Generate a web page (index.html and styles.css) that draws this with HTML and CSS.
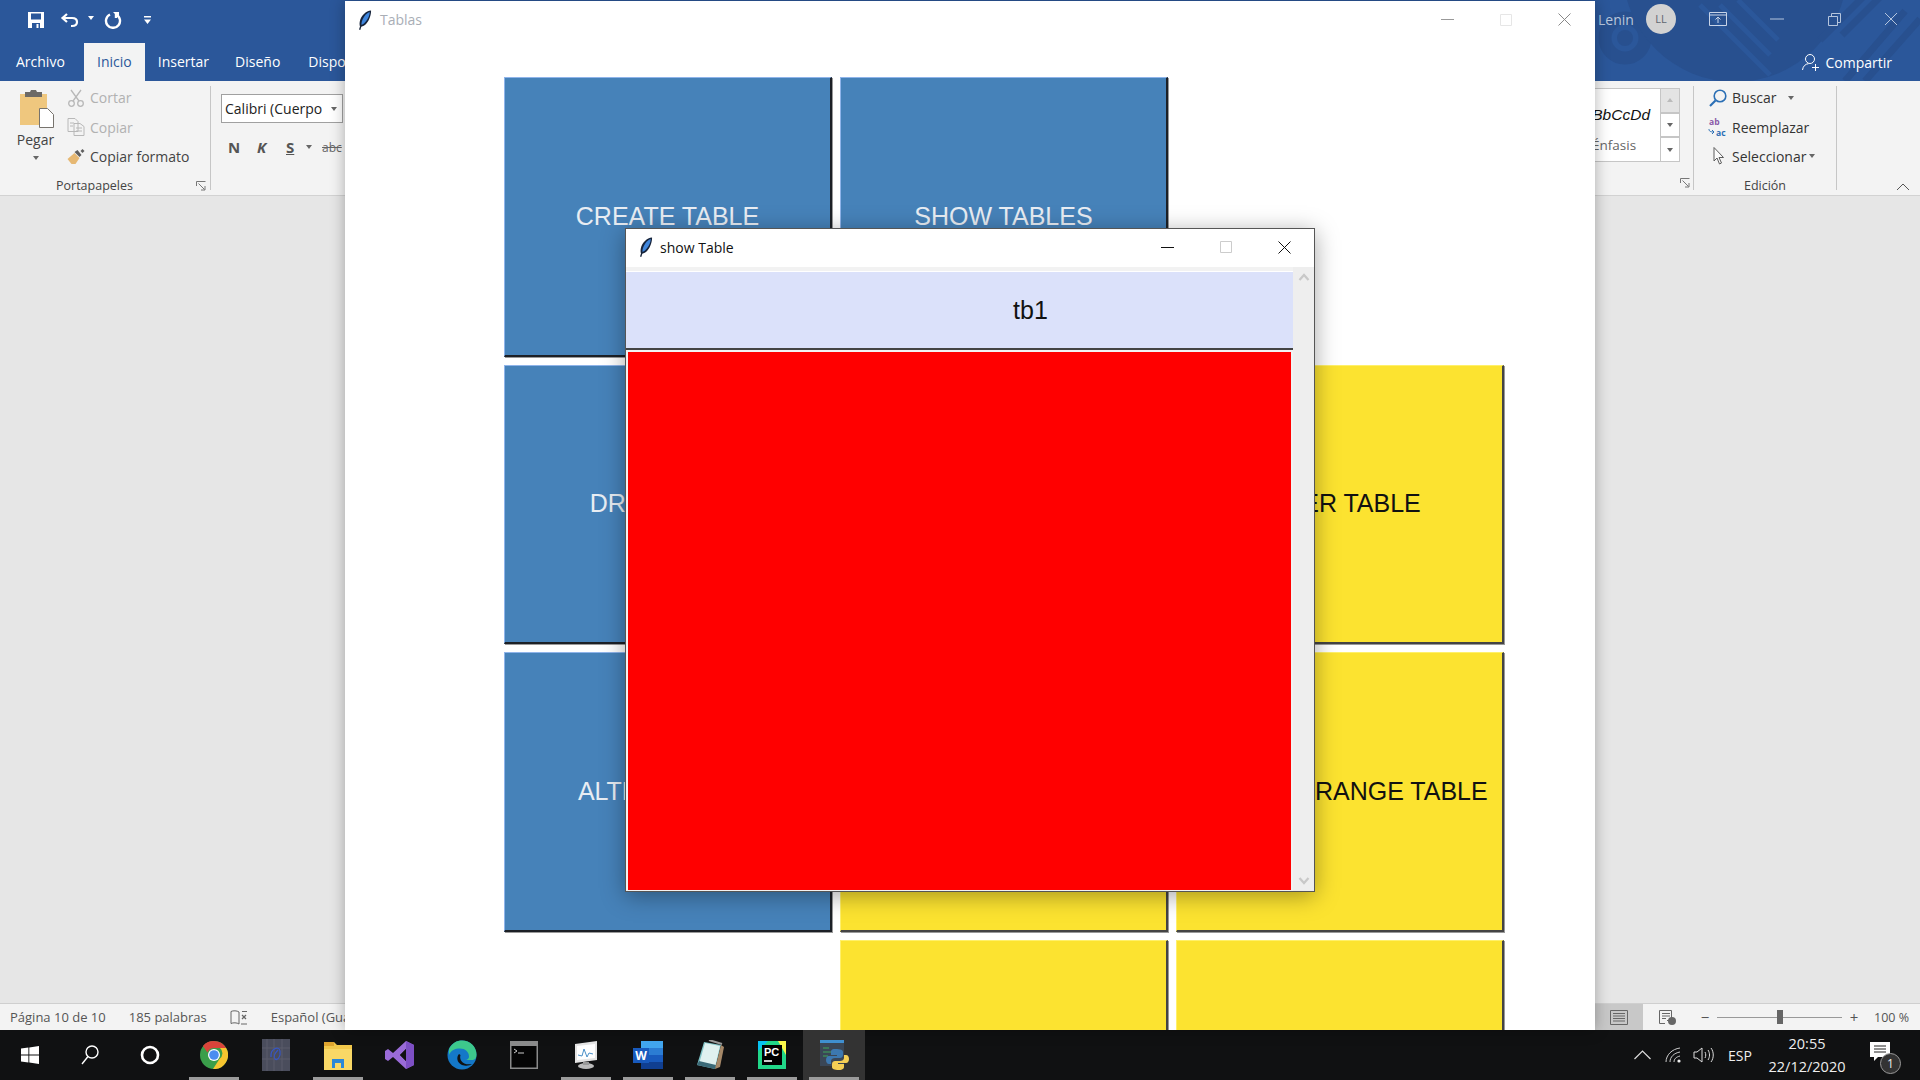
FILE: index.html
```html
<!DOCTYPE html>
<html lang="es">
<head>
  <meta charset="UTF-8">
  <title>Tablas</title>
  <link rel="stylesheet" href="styles.css">
</head>
<body>
  <svg class="defs" width="0" height="0">
    <symbol id="feather" viewBox="0 0 14 20">
      <path d="M13 .5C8 1 3 5.500 1.800 11.500c-.4 2-.3 3.800.2 5l-1 3 1.300.5 1-3.200c3.500-.8 6.500-4 8-8 1.200-3 2-6 1.700-8.800z" fill="#16233a"/>
      <path d="M11.800 2C8.500 3 5 7 3.700 12c-.3 1.200-.3 2.200-.1 3C7 13.500 9.500 9.500 10.800 6.500c.5-1.500.9-3.200 1-4.500z" fill="#3f86dd"/>
    </symbol>
  </svg>

  <div class="word">
    <header class="word-top">
      <svg class="pattern" width="400" height="81" viewBox="0 0 400 81">
        <circle cx="105" cy="38" r="20" fill="none" stroke="#28508f" stroke-width="13"/>
        <circle cx="105" cy="38" r="8" fill="#28508f"/>
        <circle cx="215" cy="-30" r="112" fill="#28508f"/>
        <path d="M180 5l70 70M200 5l50 50M218 0l40 40" stroke="#2b579a" stroke-width="5"/>
        <path d="M325 81l60-70M345 81l55-62M300 40l45-45M322 35l40-40" stroke="#28508f" stroke-width="7"/>
      </svg>
      <div class="top-row">
        <div class="quick">
          <svg class="qa-save" width="18" height="18" viewBox="0 0 18 18"><path d="M1 1h16v16H1z" fill="#fff"/><path d="M4 2.500h10v6H4zM5 12h8v5H5z" fill="#2b579a"/><path d="M9.500 13h2v4h-2z" fill="#fff"/></svg>
          <svg class="qa-undo" width="20" height="18" viewBox="0 0 20 18"><path d="M7 3L2.500 7 7 11M3 7h9c3 0 5 1.500 5 4s-2 4-5 4h-1" fill="none" stroke="#fff" stroke-width="2.200"/></svg>
          <span class="caret white"></span>
          <svg class="qa-redo" width="18" height="18" viewBox="0 0 18 18"><path d="M6 3.500a7 7 0 1 0 6 0M12 1v6" fill="none" stroke="#fff" stroke-width="2.400"/><path d="M9 1h6v6z" fill="#fff"/></svg>
          <svg class="qa-more" width="7" height="8" viewBox="0 0 7 8"><path d="M0 0h7v1.500H0zM0 3.500h7L3.500 8z" fill="#fff"/></svg>
        </div>
        <div class="account">
          <span class="user">Lenin</span>
          <span class="avatar">LL</span>
          <svg class="ctl-mon" width="18" height="14" viewBox="0 0 18 14"><path d="M.5.500h17v13H.500zM.5 3h17M9 11V5M6.500 7.500L9 5l2.500 2.500" fill="none" stroke="#c8d4e8"/></svg>
          <svg class="ctl-min" width="14" height="2" viewBox="0 0 14 2"><path d="M0 1h14" stroke="#b5c5dd"/></svg>
          <svg class="ctl-res" width="13" height="13" viewBox="0 0 13 13"><path d="M.5 3.500h9v9h-9zM3.500 3.500v-3h9v9h-3" fill="none" stroke="#b5c5dd"/></svg>
          <svg class="ctl-close" width="14" height="14" viewBox="0 0 14 14"><path d="M1 1l12 12M13 1L1 13" stroke="#b5c5dd"/></svg>
        </div>
      </div>
      <div class="tab-row">
        <nav class="tabs">
          <span class="tab tab-file">Archivo</span>
          <span class="tab active">Inicio</span>
          <span class="tab tab-ins">Insertar</span>
          <span class="tab tab-dis">Diseño</span>
          <span class="tab">Disposición</span>
        </nav>
        <div class="share">
          <svg width="18" height="19" viewBox="0 0 18 19"><circle cx="8" cy="6" r="4.500" fill="none" stroke="#fff"/><path d="M.5 17c.5-4 3-6 6-6.300M10 11.500h.1M13.500 11v7M10 14.500h7" fill="none" stroke="#fff"/></svg>
          <span>Compartir</span>
        </div>
      </div>
    </header>

    <section class="ribbon">
      <div class="group group-clip">
        <div class="group-body">
          <div class="paste">
            <svg width="34" height="38" viewBox="0 0 34 38"><path d="M0 4h27v31H0z" fill="#efc77e"/><path d="M5 2h5l1-2h5l1 2h5v5H5z" fill="#6d6a66"/><path d="M19.500 18.500h8l6 6v13h-14z" fill="#fff" stroke="#77736d"/></svg>
            <span>Pegar</span>
            <span class="caret"></span>
          </div>
          <div class="stack">
            <div class="cmd off"><svg width="16" height="18" viewBox="0 0 16 18"><circle cx="3.500" cy="14.500" r="2.800" fill="none" stroke="#b8b8b8" stroke-width="1.300"/><circle cx="12.500" cy="14.500" r="2.800" fill="none" stroke="#b8b8b8" stroke-width="1.300"/><path d="M5 12L13 1M11 12L3 1" stroke="#b8b8b8" stroke-width="1.300"/></svg><span>Cortar</span></div>
            <div class="cmd off"><svg width="17" height="18" viewBox="0 0 17 18"><path d="M.5.500h7l3 3v10H.500zM6.500 5.500h6l4 3v9h-10z" fill="#f3f3f3" stroke="#b8b8b8"/><path d="M2.500 5h4M2.500 8h3M8.500 10h6M8.500 13h6" stroke="#b8b8b8"/></svg><span>Copiar</span></div>
            <div class="cmd"><svg width="17" height="16" viewBox="0 0 17 16"><path d="M0 11l7-6 5 5-4 6H4z" fill="#e6b873"/><path d="M7 4l3-2 4 5-2 2z" fill="#5f5f5f"/><path d="M13 3l2-2 2 2-2 2z" fill="#5f5f5f"/></svg><span>Copiar formato</span></div>
          </div>
        </div>
        <div class="group-name">Portapapeles<svg class="launcher" width="10" height="10" viewBox="0 0 10 10"><path d="M.5 5V.5H9.500M2.500 2.500l6 6M5 9H9V5" fill="none" stroke="#777"/></svg></div>
      </div>
      <div class="group group-font">
        <div class="font-box"><span>Calibri (Cuerpo</span><span class="caret"></span></div>
        <div class="font-row">
          <b class="fmt">N</b><b class="fmt fmt-k">K</b><b class="fmt fmt-s">S</b><span class="caret"></span><s class="fmt-abc">abc</s>
        </div>
      </div>
      <div class="ribbon-fill"></div>
      <div class="group group-styles">
        <div class="gallery">
          <div class="style-item">
            <span class="sample">BbCcDd</span>
            <span class="style-name">Énfasis</span>
          </div>
          <div class="gallery-arrows">
            <span class="arrow arrow-up"><span class="caret up"></span></span>
            <span class="arrow"><span class="caret"></span></span>
            <span class="arrow arrow-more"><span class="caret"></span></span>
          </div>
        </div>
        <svg class="launcher launcher-styles" width="10" height="10" viewBox="0 0 10 10"><path d="M.5 5V.5H9.500M2.500 2.500l6 6M5 9H9V5" fill="none" stroke="#777"/></svg>
      </div>
      <div class="group group-edit">
        <div class="stack">
          <div class="cmd"><svg width="18" height="18" viewBox="0 0 18 18"><circle cx="11" cy="7" r="5.800" fill="none" stroke="#2b6fb5" stroke-width="1.600"/><path d="M6.500 11.500L1 17" stroke="#2b6fb5" stroke-width="2.200"/></svg><span>Buscar</span><span class="caret tail"></span></div>
          <div class="cmd"><svg width="20" height="20" viewBox="0 0 20 20"><text x="1" y="8" class="ic-ab">ab</text><text x="8" y="19" class="ic-ac">ac</text><path d="M1 12c0 2 1 3 5 3M4 13l2 2-2 2" fill="none" stroke="#2b6fb5"/></svg><span>Reemplazar</span></div>
          <div class="cmd"><svg width="18" height="20" viewBox="0 0 18 20"><path d="M5 1.500v13.500l3-3 2.500 6 2-1-2.500-5.500h4.500z" fill="#fbfbfb" stroke="#5c5c5c"/></svg><span>Seleccionar</span><span class="caret tail-s"></span></div>
        </div>
        <div class="group-name">Edición</div>
      </div>
      <div class="ribbon-end">
        <svg width="14" height="8" viewBox="0 0 14 8"><path d="M1 7l6-6 6 6" fill="none" stroke="#555"/></svg>
      </div>
    </section>

    <main class="doc"></main>

    <footer class="status">
      <div class="status-left">
        <span>Página 10 de 10</span>
        <span>185 palabras</span>
        <svg width="18" height="15" viewBox="0 0 18 15"><path d="M9 2C7 .500 3 .500 1 1.500v12c2-1 6-1 8 .500M9 2v12M12 1.500h5M11 14h6" fill="none" stroke="#666"/><path d="M12 5l4 4M16 5l-4 4" stroke="#666" stroke-width="1.300"/></svg>
        <span>Español (Guatemala)</span>
      </div>
      <div class="status-right">
        <span class="view-active"><svg width="18" height="15" viewBox="0 0 18 15"><path d="M.5.500h17v14H.500zM3 3.500h12M3 6h12M3 8.500h12M3 11h12" fill="none" stroke="#666"/></svg></span>
        <svg class="view-web" width="18" height="15" viewBox="0 0 18 15"><path d="M.5.500h12v10H8M3 3.500h8M3 6h8M3 8.500h4M.5.500v13H6" fill="none" stroke="#666"/><circle cx="13" cy="11" r="4" fill="#666"/></svg>
        <span class="zoom-sign">−</span>
        <div class="slider"><span class="thumb"></span></div>
        <span class="zoom-sign">+</span>
        <span class="zoom-val">100 %</span>
      </div>
    </footer>
  </div>

  <!-- ventana principal -->
  <div class="window tablas">
    <div class="win-title faded">
      <svg class="feather" width="14" height="20"><use href="#feather"/></svg>
      <span class="win-name">Tablas</span>
      <div class="win-ctl">
        <svg width="13" height="1" viewBox="0 0 13 1"><path d="M0 .5h13" stroke="#999"/></svg>
        <svg width="12" height="12" viewBox="0 0 12 12"><path d="M.5.500h11v11H.500z" fill="none" stroke="#e6e6e6"/></svg>
        <svg width="13" height="13" viewBox="0 0 13 13"><path d="M.5.500l12 12M12.500.500l-12 12" stroke="#888"/></svg>
      </div>
    </div>
    <div class="btn-grid">
      <button class="btn blue">CREATE TABLE</button>
      <button class="btn blue">SHOW TABLES</button>
      <span></span>
      <button class="btn blue">DROP TABLE</button>
      <button class="btn yellow"></button>
      <button class="btn yellow">ALTER TABLE</button>
      <button class="btn blue">ALTER TABLES</button>
      <button class="btn yellow"></button>
      <button class="btn yellow">COMBINE RANGE TABLE</button>
      <span></span>
      <button class="btn yellow"></button>
      <button class="btn yellow"></button>
    </div>
  </div>

  <!-- ventana show Table -->
  <div class="window show-table">
    <div class="win-title dark">
      <svg class="feather" width="14" height="20"><use href="#feather"/></svg>
      <span class="win-name">show Table</span>
      <div class="win-ctl">
        <svg width="13" height="1" viewBox="0 0 13 1"><path d="M0 .5h13" stroke="#111"/></svg>
        <svg width="12" height="12" viewBox="0 0 12 12"><path d="M.5.500h11v11H.500z" fill="none" stroke="#ccc"/></svg>
        <svg width="13" height="13" viewBox="0 0 13 13"><path d="M.5.500l12 12M12.500.500l-12 12" stroke="#111"/></svg>
      </div>
    </div>
    <div class="show-body">
      <div class="show-main">
        <div class="show-head">tb1</div>
        <div class="show-red"></div>
      </div>
      <div class="scrollbar">
        <svg width="12" height="8" viewBox="0 0 12 8"><path d="M1.500 7L6 2l4.500 5" fill="none" stroke="#c8c8c8" stroke-width="2.200"/></svg>
        <svg width="12" height="8" viewBox="0 0 12 8"><path d="M1.500 1L6 6l4.500-5" fill="none" stroke="#c8c8c8" stroke-width="2.200"/></svg>
      </div>
    </div>
  </div>

  <div class="taskbar">
    <div class="task-fixed">
      <svg width="18" height="18" viewBox="0 0 18 18"><path d="M0 2.600l7.400-1v7H0zM8.300 1.400L18 0v8.600H8.300zM0 9.400h7.400v7L0 15.400zM8.300 9.400H18V18l-9.700-1.400z" fill="#fff"/></svg>
    </div>
    <div class="task-fixed">
      <svg width="18" height="20" viewBox="0 0 18 20"><circle cx="11" cy="7" r="6" fill="none" stroke="#fff" stroke-width="1.400"/><path d="M7 11.500L1 19" stroke="#fff" stroke-width="1.400"/></svg>
    </div>
    <div class="task-fixed">
      <svg width="20" height="20" viewBox="0 0 20 20"><circle cx="10" cy="10" r="8" fill="none" stroke="#fff" stroke-width="2.600"/></svg>
    </div>
    <div class="task-icons">
      <div class="task open">
        <svg width="28" height="28" viewBox="0 0 28 28"><circle cx="14" cy="14" r="14" fill="#3a9e4a"/><path d="M14 0a14 14 0 0 1 12.100 7H14a7 7 0 0 0-6.500 4.400L2.900 5A14 14 0 0 1 14 0z" fill="#d9443a"/><path d="M26.100 7A14 14 0 0 1 13 28l6.500-10a7 7 0 0 0 .5-11z" fill="#f6c52f"/><circle cx="14" cy="14" r="6" fill="#fff"/><circle cx="14" cy="14" r="4.800" fill="#4a8cf0"/></svg>
      </div>
      <div class="task">
        <svg width="28" height="32" viewBox="0 0 28 32"><path d="M0 0h28v32H0z" fill="#4a4d5c"/><path d="M5 0v32M12 0v32M20 0v32M0 9h28M0 20h28" stroke="#5a5d6a"/><path d="M9 18c-1-8 8-12 9-6s-3 10-5 8 0-6 3-9" fill="none" stroke="#3556c8" stroke-width="1.200"/></svg>
      </div>
      <div class="task open">
        <svg width="28" height="30" viewBox="0 0 28 30"><path d="M0 2h10l3 3h15v25H0z" fill="#f2c84b"/><path d="M0 2h10v4H0z" fill="#dfa52f"/><path d="M0 9h28v21H0z" fill="#f9d866"/><path d="M8 28v-9h12v9h-3v-5h-6v5z" fill="#2b88d8"/><path d="M8 19h12v3H8z" fill="#2b88d8"/></svg>
      </div>
      <div class="task">
        <svg width="30" height="30" viewBox="0 0 30 30"><path d="M21 1l8 4v20l-8 4L8 17l-5 4-3-2V11l3-2 5 4zM21 9l-6 6 6 6z" fill="#9a6bd8"/><path d="M21 1l8 4v20l-8 4z" fill="#7d4fc4" fill-rule="evenodd"/><path d="M21 9v12l-6-6z" fill="#111"/></svg>
      </div>
      <div class="task">
        <svg width="30" height="30" viewBox="0 0 30 30"><circle cx="15" cy="15" r="14.500" fill="#1478c8"/><path d="M2 9C5 3 10 .5 15 .5c8 0 14.500 6 14.500 14 0 3-1 5-3.500 5.500h-8c3 0 4-2 4-3.500C22 12 18 8.500 13 8.500 8 8.500 4 10 2 15z" fill="#3dc88c"/><path d="M12 14c-3 3-2 9 3 11 4 1.500 8 .5 10-1-4 1-9 0-11-3.500-1-2-1-4-.5-5.500z" fill="#111"/></svg>
      </div>
      <div class="task">
        <svg width="28" height="28" viewBox="0 0 28 28"><path d="M0 0h28v28H0z" fill="#8a8a8a"/><path d="M1.500 5h25v21.500h-25z" fill="#050505"/><path d="M4 8l3 2-3 2M8 12h6" fill="none" stroke="#ccc"/></svg>
      </div>
      <div class="task open">
        <svg width="30" height="30" viewBox="0 0 30 30"><path d="M4 4l22-3v19L4 23z" fill="#e4e4e4"/><path d="M6 6l18-2v14L6 20z" fill="#fff"/><path d="M7 15l4 1 2-7 3 8 2-4 4 1" fill="none" stroke="#4a90c8"/><ellipse cx="15" cy="26" rx="8" ry="3" fill="#bbb"/><path d="M12 22h6v3h-6z" fill="#999"/></svg>
      </div>
      <div class="task open">
        <svg width="30" height="30" viewBox="0 0 30 30"><path d="M8 1h22v28H8z" fill="#2b7cd3"/><path d="M8 1h22v7H8z" fill="#41a5ee"/><path d="M8 15h22v7H8z" fill="#185abd"/><path d="M8 22h22v7H8z" fill="#103f91"/><path d="M0 8h16v15H0z" fill="#185abd"/><text x="8" y="20" class="ic-w">W</text></svg>
      </div>
      <div class="task open">
        <svg width="30" height="30" viewBox="0 0 30 30"><path d="M9 2l17 3-6 24L2 25z" fill="#7fc4c8"/><path d="M10 3l15 3-5 21L4 24z" fill="#dff1f0"/><path d="M14 0l13 4" stroke="#999" stroke-width="2"/><path d="M2 25l18 4 1-4L4 21z" fill="#3b6a78"/><path d="M26 5l-6 24 5-2 4-20z" fill="#a58868"/></svg>
      </div>
      <div class="task open">
        <svg width="28" height="28" viewBox="0 0 28 28"><path d="M0 0h28v28H0z" fill="#21d789"/><path d="M20 0h8v14z" fill="#fcf84a"/><path d="M0 10V0h10z" fill="#07c3f2"/><path d="M4 4h20v20H4z" fill="#000"/><text x="6" y="15" class="ic-pc">PC</text><path d="M6 20h8" stroke="#fff" stroke-width="1.600"/></svg>
      </div>
      <div class="task open active-task">
        <svg width="30" height="30" viewBox="0 0 30 30"><path d="M1 0h24v26H1z" fill="#3a4656"/><path d="M1 0h24v3H1z" fill="#3f8fd0"/><path d="M4 8h6M4 12h8M4 16h5" stroke="#3ea65a"/><path d="M16 9c-4 0-4 2-4 3v3h6v1h-8c-2 0-3 2-3 4s1 4 3 4h2v-3c0-2 2-3 4-3h5c1.500 0 3-1 3-3v-3c0-2-2-3-8-3z" fill="#3c78b0"/><path d="M20 30c4 0 5-2 5-3v-3h-6v-1h8c2 0 3-2 3-4s-1-4-3-4h-2v3c0 2-2 3-4 3h-5c-1.500 0-3 1-3 3v3c0 2 2 3 7 3z" fill="#f5cf55"/></svg>
      </div>
    </div>
    <div class="tray">
      <svg class="tray-chev" width="17" height="10" viewBox="0 0 17 10"><path d="M.5 9L8.500 1l8 8" fill="none" stroke="#ddd" stroke-width="1.200"/></svg>
      <svg class="tray-wifi" width="17" height="16" viewBox="0 0 17 16"><path d="M1 15C1 8 7 2 15 1M5 15c0-5 4-9 10-10M9 15c0-3 2-5 6-6" fill="none" stroke="#ccc"/><circle cx="14" cy="14" r="1.600" fill="#eee"/></svg>
      <svg class="tray-vol" width="21" height="16" viewBox="0 0 21 16"><path d="M1 5h3l5-4v14l-5-4H1z" fill="none" stroke="#ddd"/><path d="M12 5c1 2 1 4 0 6M15 3c2 3 2 7 0 10M18 1c3 4 3 10 0 14" fill="none" stroke="#ddd"/></svg>
      <span class="tray-lang">ESP</span>
      <div class="clock"><span>20:55</span><span>22/12/2020</span></div>
      <div class="notif">
        <svg width="20" height="20" viewBox="0 0 20 20"><path d="M0 0h20v15H8l-4 4v-4H0z" fill="#fff"/><path d="M4 4h12M4 7h12M4 10h12" stroke="#222"/></svg>
        <span class="badge">1</span>
      </div>
    </div>
  </div>
</body>
</html>
```

FILE: styles.css
```css
/* base */
html, body {
  margin: 0;
  padding: 0;
  width: 1920px;
  height: 1080px;
  overflow: hidden;
}

body {
  position: relative;
  font-family: "Open Sans", "Noto Sans", sans-serif;
  background: #111;
}

.defs {
  position: absolute;
}

svg {
  display: block;
  flex: none;
}

.caret {
  display: inline-block;
  width: 0;
  height: 0;
  border-left: 3.5px solid transparent;
  border-right: 3.5px solid transparent;
  border-top: 4px solid #666;
}

.caret.white {
  border-top-color: #fff;
}

.caret.up {
  border-top: 0;
  border-bottom: 4px solid #bbb;
}

/* word de fondo */
.word {
  display: flex;
  flex-direction: column;
  height: 1030px;
}

.word-top {
  position: relative;
  height: 81px;
  background: #2b579a;
  color: #fff;
  flex: none;
  overflow: hidden;
}

.pattern {
  position: absolute;
  right: 0;
  top: 0;
}

.top-row {
  position: relative;
  display: flex;
  justify-content: space-between;
  height: 43px;
}

.quick {
  display: flex;
  align-items: center;
  padding: 0 0 4px 27px;
}

.qa-undo { margin-left: 15px; }
.qa-undo + .caret { margin-left: 8px; margin-bottom: 4px; }
.qa-redo { margin-left: 10px; }
.qa-more { margin-left: 22px; }

.account {
  display: flex;
  align-items: center;
  padding-bottom: 5px;
}

.user {
  font-size: 14px;
  color: #b9c7dd;
  width: 48px;
}

.avatar {
  width: 30px;
  height: 30px;
  border-radius: 50%;
  background: #d2d2d2;
  color: #5e6670;
  font-size: 11px;
  text-align: center;
  line-height: 30px;
}

.ctl-mon { margin-left: 33px; }
.ctl-min { margin-left: 43px; }
.ctl-res { margin-left: 44px; }
.ctl-close { margin-left: 43px; margin-right: 22px; }

.tab-row {
  position: relative;
  display: flex;
  justify-content: space-between;
  height: 38px;
}

.tabs {
  display: flex;
}

.tab {
  font-size: 14px;
  line-height: 38px;
}

.tab-file { margin-left: 16px; margin-right: 19px; }
.tab.active {
  width: 61px;
  text-align: center;
  background: #f3f3f3;
  color: #2b579a;
  margin-right: 13px;
}
.tab-ins { margin-right: 26px; }
.tab-dis { margin-right: 28px; }

.share {
  display: flex;
  align-items: center;
  gap: 5px;
  padding: 0 28px 0 0;
  font-size: 14px;
}

/* cinta */
.ribbon {
  display: flex;
  height: 114px;
  flex: none;
  background: #f3f3f3;
  border-bottom: 1px solid #d2d2d2;
  box-sizing: content-box;
  color: #444;
  font-size: 14px;
}

.group {
  box-sizing: border-box;
  margin-top: 5px;
  height: 104px;
  border-right: 1px solid #c6c6c6;
  position: relative;
  flex: none;
}

.group-clip {
  width: 211px;
}

.group-body {
  display: flex;
  height: 84px;
}

.paste {
  width: 71px;
  display: flex;
  flex-direction: column;
  align-items: center;
  padding-top: 4px;
  box-sizing: border-box;
}

.paste svg { margin-bottom: 3px; margin-left: 2px; }
.paste .caret { margin-top: 7px; }
.paste span:first-of-type { line-height: 18px; font-size: 14px; }

.stack {
  display: flex;
  flex-direction: column;
  margin-top: -3px;
  margin-left: -2px;
}

.cmd {
  display: flex;
  align-items: center;
  flex: none;
  height: 29.4px;
  gap: 7px;
}

.cmd svg {
  width: 20px;
  margin-left: -3px;
  margin-right: -3px;
}

.cmd.off {
  color: #b1b1b1;
}

.group-name {
  position: absolute;
  left: 0;
  right: 0;
  top: 90px;
  text-align: center;
  font-size: 12.5px;
  line-height: 20px;
  padding-right: 21px;
  color: #444;
}

.launcher {
  position: absolute;
  right: 4px;
  top: 5px;
}

.group-font {
  padding-left: 10px;
  border: 0;
}

.font-box {
  box-sizing: border-box;
  width: 122px;
  height: 29px;
  margin-top: 8px;
  background: #fff;
  border: 1px solid #a0a0a0;
  display: flex;
  align-items: center;
  justify-content: space-between;
  padding: 0 5px 0 3px;
  color: #222;
  font-size: 14px;
  white-space: nowrap;
  overflow: hidden;
}

.font-row {
  display: flex;
  align-items: center;
  margin-top: 14px;
  padding-left: 7px;
}

.fmt {
  font-size: 15px;
  width: 29px;
  color: #555;
}

.fmt-k { font-style: italic; }
.fmt-s { text-decoration: underline; width: 20px; }
.fmt-abc { margin-left: 10px; font-size: 12px; color: #666; }

.ribbon-fill {
  flex: 1;
}

.group-styles {
  width: 113px;
  padding-top: 2px;
}

.gallery {
  display: flex;
  justify-content: flex-end;
  width: 99px;
  height: 74px;
}

.style-item {
  flex: 1;
  background: #fff;
  border: 1px solid #c6c6c6;
  border-right: 0;
  display: flex;
  flex-direction: column;
  overflow: hidden;
}

.sample {
  font-family: "Liberation Sans", sans-serif;
  font-style: italic;
  font-size: 15.5px;
  color: #111;
  text-align: right;
  padding-top: 16px;
  line-height: 20px;
  padding-right: 10px;
  white-space: nowrap;
}

.style-name {
  font-size: 13.5px;
  color: #666;
  padding-top: 11px;
  padding-left: 10px;
}

.gallery-arrows {
  display: flex;
  flex-direction: column;
  width: 20px;
}

.arrow {
  flex: 1;
  display: flex;
  align-items: center;
  justify-content: center;
  background: #fff;
  border: 1px solid #c6c6c6;
}

.arrow-up {
  background: #e4e4e4;
}

.arrow-more {
  box-shadow: inset 0 0 0 0 #666;
}

.launcher-styles {
  top: auto;
  bottom: 2px;
  right: 3px;
}

.group-edit {
  width: 143px;
  padding-left: 19px;
}

.group-edit .cmd {
  gap: 7px;
  color: #333;
}

.group-edit .group-name {
  padding-right: 0;
}

.tail { margin-left: 4px; }
.tail-s { margin-left: -4px; }

.ic-ab { font: 700 8.5px "Open Sans", sans-serif; fill: #8a5aa8; }
.ic-ac { font: 700 8.5px "Open Sans", sans-serif; fill: #2b6fb5; }
.ic-w { font: 700 12px "Open Sans", sans-serif; fill: #fff; text-anchor: middle; }
.ic-pc { font: 700 11px "Liberation Sans", sans-serif; fill: #fff; }

.ribbon-end {
  width: 83px;
  flex: none;
  box-sizing: border-box;
  display: flex;
  justify-content: flex-end;
  align-items: flex-end;
  padding: 0 10px 4px 0;
}

.doc {
  flex: 1;
  background: #e6e6e6;
}

.status {
  height: 26px;
  flex: none;
  background: #f3f3f3;
  border-top: 1px solid #cfcfcf;
  display: flex;
  justify-content: space-between;
  align-items: center;
  font-size: 13px;
  color: #555;
}

.status-left {
  display: flex;
  align-items: center;
  gap: 23px;
  padding-left: 10px;
  white-space: nowrap;
}

.status-right {
  display: flex;
  align-items: center;
  height: 100%;
}

.view-active {
  width: 48px;
  height: 100%;
  background: #c8c8c8;
  display: flex;
  align-items: center;
  justify-content: center;
}

.view-web {
  margin-left: 16px;
  margin-right: 22px;
}

.zoom-sign {
  width: 12px;
  text-align: center;
  font-size: 15px;
}

.slider {
  position: relative;
  width: 125px;
  height: 1px;
  background: #999;
  margin: 0 6px;
}

.thumb {
  position: absolute;
  left: 60px;
  top: -7px;
  width: 6px;
  height: 14px;
  background: #666;
}

.zoom-val {
  width: 46px;
  margin-left: 14px;
  font-size: 12.5px;
}

/* ventanas de escritorio */
.window {
  position: absolute;
  background: #fff;
  display: flex;
  flex-direction: column;
  box-sizing: border-box;
}

.tablas {
  left: 345px;
  top: 1px;
  width: 1250px;
  height: 1029px;
  box-shadow: 0 0 14px rgba(0, 0, 0, .3);
  overflow: hidden;
}

.win-title {
  display: flex;
  align-items: center;
  font-size: 14px;
  height: 38px;
  flex: none;
  box-sizing: border-box;
  padding: 0 0 1px 13px;
}

.faded { color: #a9aeb6; }
.dark { color: #111; }

.feather {
  margin-right: 8px;
}

.win-name {
  flex: 1;
}

.win-ctl {
  display: flex;
  align-items: center;
}

.tablas .win-ctl { padding-right: 24px; gap: 46px; }
.show-table .win-ctl { padding-right: 23px; gap: 46px; }

.btn-grid {
  display: grid;
  grid-template-columns: repeat(3, 328px);
  grid-auto-rows: 279.5px;
  gap: 8px;
  padding: 38px 0 0 159px;
}

.btn {
  box-sizing: border-box;
  margin: 0;
  padding: 0;
  font-family: "Liberation Sans", sans-serif;
  font-size: 25px;
  white-space: nowrap;
  border-style: solid;
  border-width: 1px 2px 2px 1px;
  box-shadow: 1px 1px 0 #999;
}

.btn.blue {
  background: #4682b9;
  color: #e8edf3;
  border-color: #8fb4ea #1c2026 #1c2026 #8fb4ea;
}

.btn.yellow {
  background: #fce330;
  color: #111;
  border-color: #fff06a #444 #444 #fff06a;
}

.show-table {
  left: 625px;
  top: 228px;
  width: 690px;
  height: 664px;
  border: 1px solid #555;
  box-shadow: 0 4px 22px rgba(0, 0, 0, .35);
}

.show-table .win-title {
  height: 38px;
  padding: 0 0 2px 13px;
}

.show-table .feather {
  margin-right: 7px;
}

.show-body {
  flex: 1;
  display: flex;
  background: #f2f2f2;
}

.show-main {
  width: 667px;
  display: flex;
  flex-direction: column;
  padding-top: 4px;
  box-sizing: border-box;
}

.show-head {
  height: 79px;
  flex: none;
  background: #dbe1fa;
  border-top: 1px solid #fff;
  border-bottom: 2px solid #444;
  box-sizing: border-box;
  text-align: center;
  font-family: "Liberation Sans", sans-serif;
  font-size: 25px;
  line-height: 76px;
  color: #111;
  padding-left: 142px;
}

.show-red {
  flex: 1;
  margin: 2px 2px 1px 2px;
  background: #f00;
}

.scrollbar {
  flex: 1;
  display: flex;
  flex-direction: column;
  align-items: center;
  justify-content: space-between;
  padding: 6px 0 6px 0;
  background: #eee;
}

/* barra de tareas */
.taskbar {
  height: 50px;
  background: #101112;
  display: flex;
  align-items: center;
  color: #eee;
}

.task-fixed {
  width: 60px;
  height: 100%;
  display: flex;
  align-items: center;
  justify-content: center;
}

.task-icons {
  display: flex;
  height: 100%;
  margin-left: 3px;
}

.task {
  position: relative;
  width: 62px;
  height: 100%;
  display: flex;
  align-items: center;
  justify-content: center;
}

.task.open::after {
  content: "";
  position: absolute;
  left: 6px;
  right: 6px;
  bottom: 0;
  height: 3px;
  background: #9b9b9b;
}

.active-task {
  background: #333;
}

.tray {
  flex: 1;
  display: flex;
  align-items: center;
  height: 100%;
  padding-left: 770px;
}

.tray-chev { margin-left: -1px; }
.tray-wifi { margin-left: 14px; }
.tray-vol { margin-left: 11px; }

.tray-lang {
  font-size: 14px;
  margin-left: 14px;
  width: 40px;
}

.clock {
  display: flex;
  flex-direction: column;
  align-items: center;
  font-size: 14.5px;
  line-height: 23px;
  width: 90px;
  margin-left: -6px;
}

.notif {
  position: relative;
  margin-left: 18px;
  width: 28px;
  height: 26px;
}

.badge {
  position: absolute;
  right: -3px;
  bottom: -6px;
  width: 19px;
  height: 19px;
  border: 1px solid #999;
  border-radius: 50%;
  background: #333;
  font-size: 12px;
  text-align: center;
  line-height: 19px;
}
```
